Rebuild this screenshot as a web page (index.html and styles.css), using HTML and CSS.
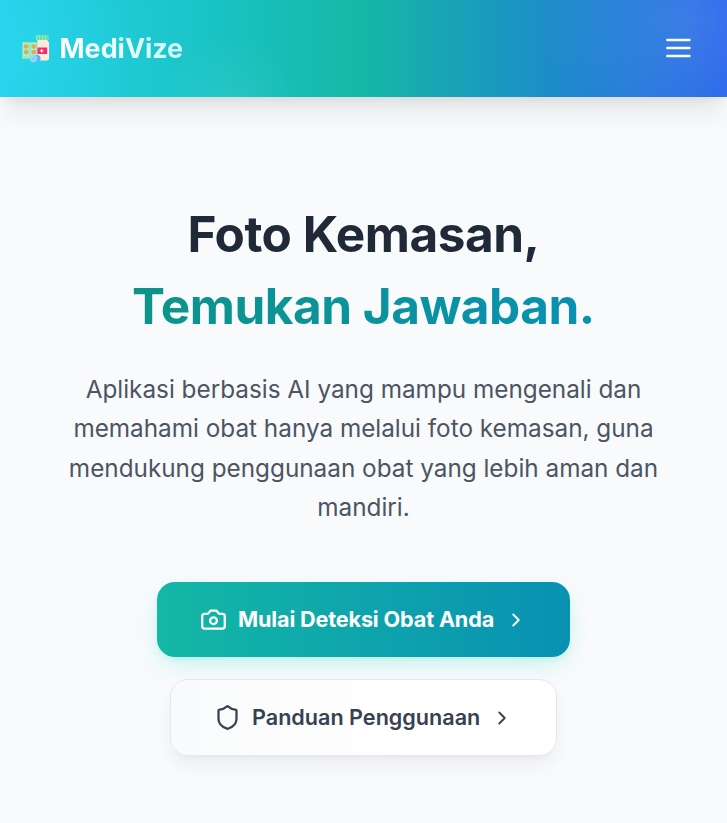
FILE: index.html
```html
<!DOCTYPE html>
<html lang="id">
<head>
<meta charset="utf-8">
<title>MediVize</title>
<link rel="stylesheet" href="styles.css">
</head>
<body>
<header class="header">
  <a class="brand">
    <svg class="logo" viewBox="0 0 28 28">
      <path fill="#8ee9bd" d="M14 0h12.500v5H14z"/>
      <path stroke="#45d3a4" stroke-width="1" d="M16 0v5M19 0v5M22 0v5M25 0v5"/>
      <path fill="#ffead9" d="M15.500 5h10q0 1.500 1.500 2.500v15.500q0 2.500-2.500 2.500h-10V8q1-1 1-3z"/>
      <path fill="#aeeecb" d="M0 7h15.500v17H0z"/>
      <path stroke="#6ad9b0" stroke-width=".6" fill="none" d="M.4 7.400h14.700v16H.4zM7.900 7.500v16M2 22h4"/>
      <g fill="#f5a445" stroke="#7fc98c" stroke-width=".4"><rect x="2" y="9.400" width="4.400" height="4" rx="1.800"/><rect x="9.600" y="9.400" width="4.400" height="4" rx="1.800"/><rect x="2" y="15" width="4.400" height="4" rx="1.800"/><rect x="9.600" y="15" width="4.400" height="4" rx="1.800"/></g>
      <path fill="#fb286c" d="M15.500 12.500H25.200v6.500h-9.700z"/>
      <path stroke="#fff" stroke-width="1.100" d="M19.700 14v3.600M17.900 15.800h3.600"/>
      <circle cx="15.200" cy="23.400" r="3.400" fill="#5eb1f6"/>
      <circle cx="11.500" cy="23.700" r="3.600" fill="#92d8fb"/>
      <path stroke="#58bde9" stroke-width=".7" d="M10 25.200l3-3"/>
    </svg>
    <span class="brand-name">MediVize</span>
  </a>
  <svg class="menu" viewBox="0 0 25 20"><path d="M1.300 2h22.200M1.300 10h22.200M1.300 18h22.200"/></svg>
</header>
<main class="hero">
  <h1 class="title"><span class="line">Foto Kemasan,</span><span class="line accent">Temukan Jawaban.</span></h1>
  <p class="lead">Aplikasi berbasis AI yang mampu mengenali dan memahami obat hanya melalui foto kemasan, guna mendukung penggunaan obat yang lebih aman dan mandiri.</p>
  <div class="actions">
    <a class="btn primary">
      <svg class="icon" viewBox="0 0 24 24"><path d="M14.500 4h-5L7 7H4a2 2 0 0 0-2 2v9a2 2 0 0 0 2 2h16a2 2 0 0 0 2-2V9a2 2 0 0 0-2-2h-3z"/><circle cx="12" cy="13" r="3"/></svg>
      <span class="label">Mulai Deteksi Obat Anda</span>
      <svg class="chevron" viewBox="0 0 24 24"><path d="m9 18 6-6-6-6"/></svg>
    </a>
    <a class="btn secondary">
      <svg class="icon" viewBox="0 0 24 24"><path d="M20 13c0 5-3.500 7.500-7.660 8.950a1 1 0 0 1-.67-.01C7.500 20.500 4 18 4 13V6a1 1 0 0 1 1-1c2 0 4.500-1.200 6.240-2.720a1.170 1.170 0 0 1 1.520 0C14.510 3.810 17 5 19 5a1 1 0 0 1 1 1z"/></svg>
      <span class="label">Panduan Penggunaan</span>
      <svg class="chevron" viewBox="0 0 24 24"><path d="m9 18 6-6-6-6"/></svg>
    </a>
  </div>
</main>
</body>
</html>
```
FILE: styles.css
```css
* { box-sizing: border-box; }
body { margin: 0; min-height: 823px; background: #f9fafc; font-family: Inter, sans-serif; overflow-x: hidden; }
svg { display: block; flex: none; }
.header {
  height: 97px; padding: 0 36px 0 22px;
  display: flex; align-items: center; justify-content: space-between;
  background:
    radial-gradient(circle at 229px 110px, rgba(255,255,255,.06), transparent 75px),
    radial-gradient(circle at 690px 20px, rgba(255,255,255,.11), transparent 150px),
    radial-gradient(circle at 20px 50px, rgba(255,255,255,.04), transparent 150px),
    linear-gradient(90deg, #22d3ee, #14b8a6 50%, #2563eb);
  box-shadow: 0 20px 25px -5px rgba(0,0,0,.08), 0 8px 10px -6px rgba(0,0,0,.08);
}
.brand { display: flex; align-items: center; gap: 9.500px; }
.logo { width: 28px; height: 28px; }
.brand-name {
  font-size: 27px; line-height: 36px; font-weight: 700; letter-spacing: -.05px;
  background: linear-gradient(90deg, #fff, #cffafe);
  -webkit-background-clip: text; background-clip: text; color: transparent;
}
.menu { width: 25px; height: 20px; margin-bottom: 1px; fill: none; stroke: #fff; stroke-width: 2.400; stroke-linecap: round; overflow: visible; }
.hero { padding: 102px 63px 0; text-align: center; }
.title { margin: 0; font-size: 49.500px; line-height: 71.500px; font-weight: 700; letter-spacing: -.5px; color: #1f2937; }
.line { display: block; width: max-content; margin: 0 auto; }
.accent { background: linear-gradient(90deg, #0d9488, #0891b2); -webkit-background-clip: text; background-clip: text; color: transparent; }
.lead { margin: 28px 0 0; font-size: 24.300px; line-height: 39.400px; color: #4b5563; }
.actions { margin-top: 54px; display: flex; flex-direction: column; align-items: center; gap: 22px; }
.btn { display: flex; align-items: center; border-radius: 18px; font-size: 21.600px; line-height: 32px; font-weight: 600; white-space: nowrap; }
.primary { width: 413px; height: 75px; padding-left: 43px; color: #fff; font-weight: 700; letter-spacing: -.14px; background: linear-gradient(90deg, #14b8a6, #0891b2); box-shadow: 0 10px 25px -3px rgba(94,234,212,.3), 0 4px 10px -4px rgba(94,234,212,.4); }
.secondary { width: 387px; height: 77px; padding-left: 43px; color: #374151; border: 1px solid #e5e7eb; background: linear-gradient(90deg, #f9fafb, #fff 60%); box-shadow: 0 10px 20px -3px rgba(31,41,55,.07), 0 4px 6px -4px rgba(31,41,55,.05); }
.icon, .chevron { fill: none; stroke: currentColor; stroke-width: 2; stroke-linecap: round; stroke-linejoin: round; }
.icon { width: 27px; height: 27px; margin-right: 11px; }
.chevron { width: 22px; height: 22px; margin: 1px 0 0 11px; }
```
